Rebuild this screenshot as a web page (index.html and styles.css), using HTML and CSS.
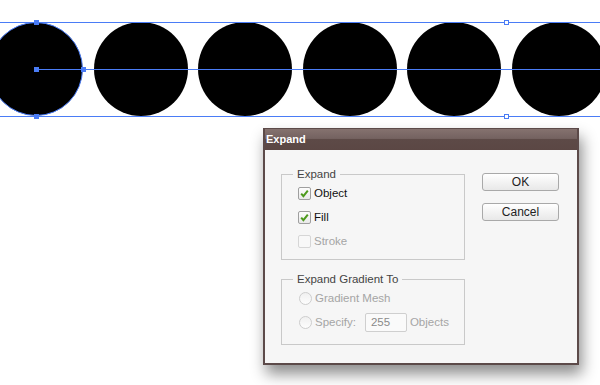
FILE: index.html
```html
<!DOCTYPE html>
<html lang="en">
<head>
    <meta charset="UTF-8">
    <meta name="viewport" content="width=device-width, initial-scale=1.0">
    <title>Expand</title>
    <link rel="stylesheet" href="styles.css">
</head>
<body>
    <div class="artboard">
        <div class="circles">
            <div class="dot selected"></div>
            <div class="dot"></div>
            <div class="dot"></div>
            <div class="dot"></div>
            <div class="dot"></div>
            <div class="dot"></div>
        </div>

        <!-- selection overlay -->
        <div class="bbox"></div>
        <div class="path-line"></div>
        <span class="handle solid h-top"></span>
        <span class="handle solid h-center"></span>
        <span class="handle solid h-right"></span>
        <span class="handle solid h-bottom"></span>
        <span class="handle hollow h-box-top"></span>
        <span class="handle hollow h-box-bottom"></span>
    </div>

    <div class="dialog">
        <div class="dialog-title">Expand</div>
        <div class="dialog-body">
            <div class="groups">
                <fieldset class="group">
                    <legend>Expand</legend>
                    <label class="row">
                        <span class="check on"><svg viewBox="0 0 13 13" width="13" height="13"><path d="M3.2 6.6 L5.4 9.2 L9.8 3.6" fill="none" stroke="#4d9a1c" stroke-width="2"/></svg></span>
                        Object
                    </label>
                    <label class="row">
                        <span class="check on"><svg viewBox="0 0 13 13" width="13" height="13"><path d="M3.2 6.6 L5.4 9.2 L9.8 3.6" fill="none" stroke="#4d9a1c" stroke-width="2"/></svg></span>
                        Fill
                    </label>
                    <label class="row disabled">
                        <span class="check"></span>
                        Stroke
                    </label>
                </fieldset>

                <fieldset class="group group-gradient">
                    <legend>Expand Gradient To</legend>
                    <label class="row disabled">
                        <span class="radio"></span>
                        Gradient Mesh
                    </label>
                    <label class="row disabled">
                        <span class="radio"></span>
                        Specify:
                        <span class="num">255</span>
                        Objects
                    </label>
                </fieldset>
            </div>

            <div class="buttons">
                <button class="btn">OK</button>
                <button class="btn">Cancel</button>
            </div>
        </div>
    </div>
</body>
</html>
```

FILE: styles.css
```css
body {
    margin: 0;
    width: 600px;
    height: 385px;
    overflow: hidden;
    background: #fff;
    font-family: 'Liberation Sans', Arial, sans-serif;
    font-size: 11.5px;
}
.artboard {
    position: relative;
    padding-top: 22px;
    height: 95px;
}
.circles {
    display: flex;
    gap: 10.6px;
    margin-left: -11px;
}
.dot {
    flex: none;
    width: 94px;
    height: 94px;
    border-radius: 50%;
    background: #000;
}
.dot.selected {
    box-sizing: border-box;
    border: 1px solid #4a7cf6;
}
.bbox {
    position: absolute;
    top: 22px;
    left: 0;
    right: 0;
    height: 93px;
    border-top: 1px solid #4a7cf6;
    border-bottom: 1px solid #4a7cf6;
}
.path-line {
    position: absolute;
    top: 69px;
    left: 36px;
    right: 0;
    height: 1px;
    background: #4a7cf6;
}
.handle {
    position: absolute;
    width: 5px;
    height: 5px;
    box-sizing: border-box;
    margin: -2px 0 0 -2px;
}
.handle.solid {
    background: #4a7cf6;
}
.handle.hollow {
    background: #fff;
    border: 1px solid #4a7cf6;
}
.h-top { left: 36px; top: 22px; }
.h-center { left: 36px; top: 69px; }
.h-right { left: 83px; top: 69px; }
.h-bottom { left: 36px; top: 116px; }
.h-box-top { left: 506px; top: 22px; }
.h-box-bottom { left: 506px; top: 116px; }

/* dialog */
.dialog {
    margin: 11px 0 0 263px;
    width: 316px;
    box-sizing: border-box;
    border: 2px solid #5c4a49;
    border-top-width: 1px;
    background: #f6f6f6;
    box-shadow: 3px 9px 14px rgba(0, 0, 0, 0.45);
}
.dialog-title {
    height: 21px;
    line-height: 21px;
    padding-left: 1px;
    color: #fff;
    font-weight: bold;
    font-size: 11px;
    background: linear-gradient(#85726f, #746260 45%, #5d4a47 50%, #5b4744);
}
.dialog-body {
    display: flex;
    gap: 17px;
    padding: 17px 18px 18px 16px;
}
.groups {
    display: flex;
    flex-direction: column;
    gap: 12px;
}
.group {
    width: 184px;
    box-sizing: border-box;
    margin: 0;
    padding: 0 0 6px 16px;
    border: 1px solid #c9c9c9;
}
.group legend {
    padding: 0 4px;
    margin-left: -5px;
    color: #444;
    line-height: 14px;
}
.group-gradient {
    padding-bottom: 10px;
}
.row {
    display: flex;
    align-items: center;
    gap: 3px;
    height: 24px;
    color: #111;
}
.row.disabled {
    color: #a5a5a5;
}
.check {
    width: 13px;
    height: 13px;
    box-sizing: border-box;
    border: 1px solid #9f9f9f;
    border-radius: 2px;
    background: linear-gradient(#fdfdfd, #e9e9e9);
    display: flex;
}
.row.disabled .check {
    border-color: #d6d6d6;
    background: #f8f8f8;
}
.check svg {
    margin: -1px;
}
.radio {
    width: 13px;
    height: 13px;
    box-sizing: border-box;
    margin-left: 1px;
    border: 1px solid #cdcdcd;
    border-radius: 50%;
    background: linear-gradient(#f0f0f0, #fdfdfd);
}
.num {
    width: 42px;
    height: 19px;
    box-sizing: border-box;
    margin-left: 6px;
    padding-left: 5px;
    line-height: 17px;
    border: 1px solid #cfcfcf;
    border-radius: 2px;
    background: #fafafa;
    color: #8a8a8a;
}
.buttons {
    display: flex;
    flex-direction: column;
    gap: 12px;
    padding-top: 6px;
}
.btn {
    width: 77px;
    height: 18px;
    padding: 0;
    font-family: inherit;
    font-size: 12px;
    color: #222;
    border: 1px solid #a9a9a9;
    border-radius: 3px;
    background: linear-gradient(#ffffff, #e8e8e8);
}
```
